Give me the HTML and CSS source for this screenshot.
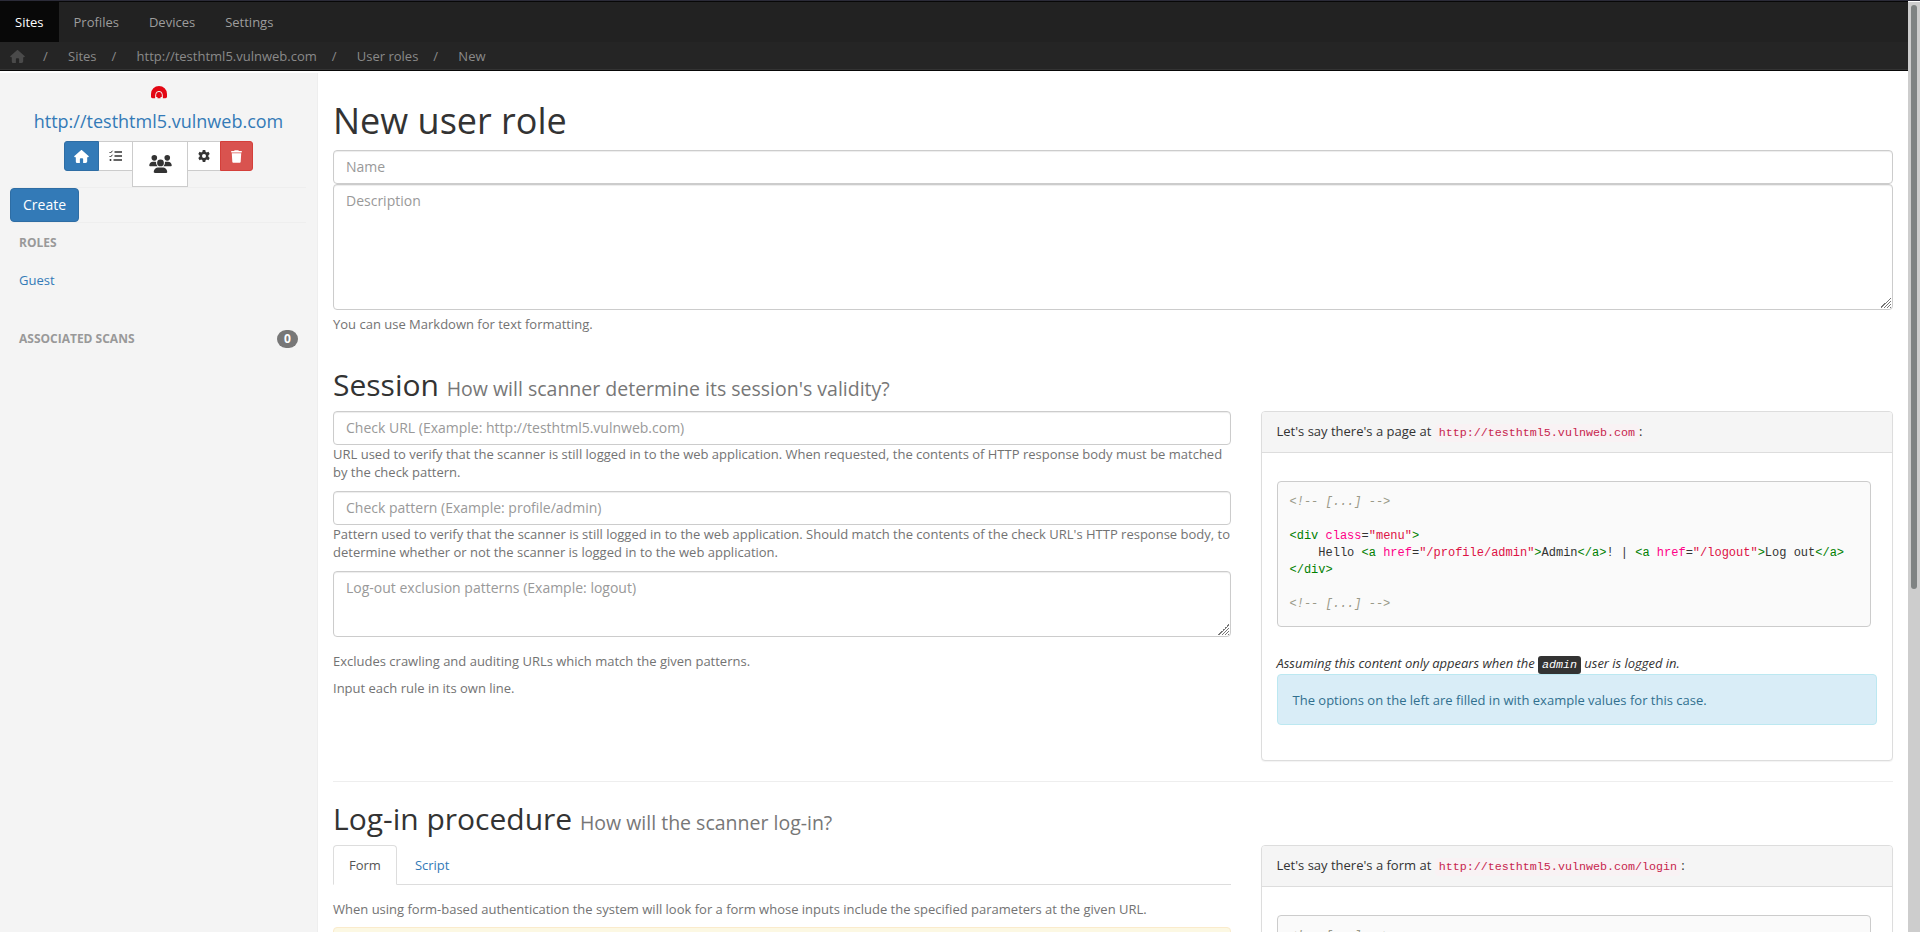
FILE: index.html
```html
<!DOCTYPE html>
<html lang="en">
<head>
<meta charset="utf-8">
<title>New user role</title>
<link rel="stylesheet" href="styles.css">
</head>
<body>
<div class="window">
<div class="page">
  <header>
    <nav class="navbar">
      <a class="nav-item active">Sites</a><a class="nav-item">Profiles</a><a class="nav-item">Devices</a><a class="nav-item">Settings</a>
    </nav>
    <ol class="breadcrumb">
      <li><svg class="crumb-home" viewBox="0 0 576 512"><path d="M575.8 255.5c0 18-15 32.1-32 32.1h-32l.7 160.2c.2 35.5-28.500 64.200-64 64.200H352V352c0-18-14-32-32-32h-64c-18 0-32 14-32 32v160H128c-35 0-64-28-64-64V287.600H32c-18 0-32-14-32-32 0-9 3-17 10-24L266.400 8c7-7 15-8 22-8s15 2 21 7l255 224.500c8 7 12 15 11.400 24z"/></svg></li>
      <li>Sites</li><li>http://testhtml5.vulnweb.com</li><li>User roles</li><li>New</li>
    </ol>
  </header>
  <div class="body">
    <aside class="sidebar">
      <svg class="logo" viewBox="0 0 16 13"><path d="M0 8a8 8 0 0 1 16 0v3a2 2 0 0 1-2 1.200H2A2 2 0 0 1 0 11z" fill="#e30613"/><path d="M4.700 11.500V8.700a3.300 3.300 0 0 1 6.600 0v2.800" fill="none" stroke="#f4f4f4" stroke-width="1"/><path d="M4.200 11h2.300v2H4.200zM9.500 11h2.300v2H9.500z" fill="#f4f4f4"/><circle cx="8" cy="9.600" r="2.100" fill="#e30613"/></svg>
      <a class="site-link">http://testhtml5.vulnweb.com</a>
      <div class="btn-group">
        <a class="btn primary"><svg width="15" height="13" viewBox="0 0 576 512"><path d="M575.8 255.5c0 18-15 32.1-32 32.1h-32l.7 160.2c.2 35.5-28.500 64.200-64 64.200H352V352c0-18-14-32-32-32h-64c-18 0-32 14-32 32v160H128c-35 0-64-28-64-64V287.600H32c-18 0-32-14-32-32 0-9 3-17 10-24L266.400 8c7-7 15-8 22-8s15 2 21 7l255 224.500c8 7 12 15 11.400 24z"/></svg></a>
        <a class="btn list"><svg width="13" height="12" viewBox="0 0 26 24"><path d="M11 2.500h15v3H11zM11 10.500h15v3H11zM9 18.500h17v3H9zM3 18a2 2 0 1 1 0 4 2 2 0 0 1 0-4z"/><path d="M1 4 3 6 7 1.500M1 12l2 2L7 9.500" fill="none" stroke="currentColor" stroke-width="2"/></svg></a>
        <a class="btn current"><svg width="23" height="18" viewBox="0 0 640 512"><circle cx="144" cy="80" r="80"/><circle cx="512" cy="80" r="80"/><circle cx="320" cy="224" r="96"/><path d="M0 298.700C0 239.800 47.800 192 106.700 192h42.600c16 0 31 3.500 44.700 9.700a129 129 0 0 0 41 118.300H21.300C9.600 320 0 310.400 0 298.700zM405.300 320h-.3a128 128 0 0 0 41-118.300c13.600-6.200 28.700-9.700 44.600-9.700h42.700C592.200 192 640 239.800 640 298.700c0 11.700-9.600 21.300-21.300 21.300zM128 485.300C128 411.700 187.700 352 261.300 352h117.400C452.300 352 512 411.700 512 485.300c0 14.700-11.900 26.700-26.700 26.700H154.700c-14.800 0-26.700-12-26.700-26.700z"/></svg></a>
        <a class="btn gear"><svg width="12" height="12" viewBox="0 0 24 24"><path fill-rule="evenodd" d="M9.500 0h5l.7 3.400 2.400 1.400 3.300-1.100 2.500 4.300-2.600 2.300v3.400l2.600 2.300-2.500 4.300-3.300-1.100-2.400 1.400-.7 3.400h-5l-.7-3.400-2.400-1.400-3.300 1.100L.6 16l2.600-2.300v-3.400L.6 8l2.500-4.300 3.300 1.100 2.400-1.400zM12 8a4 4 0 1 0 0 8 4 4 0 0 0 0-8z"/></svg></a>
        <a class="btn danger"><svg width="11" height="13" viewBox="0 0 448 512"><path d="M135 18c6-11 17-18 29-18h120c12 0 23 7 29 18l7 14h96c18 0 32 14 32 32s-14 32-32 32H32C14 96 0 82 0 64s14-32 32-32h96zM32 128h384l-21 339c-2 25-23 45-48 45H101c-25 0-46-20-48-45z"/></svg></a>
      </div>
      <div class="create-row"><a class="create">Create</a></div>
      <h5 class="side-title">ROLES</h5>
      <a class="role-link">Guest</a>
      <h5 class="side-title scans">ASSOCIATED SCANS <span class="badge">0</span></h5>
    </aside>
    <main class="main">
      <h1>New user role</h1>
      <input class="control" type="text" placeholder="Name">
      <textarea class="control description" placeholder="Description"></textarea>
      <p class="help markdown">You can use Markdown for text formatting.</p>

      <h2 class="session-title">Session <small>How will scanner determine its session's validity?</small></h2>
      <section class="row session">
        <div class="fields">
          <input class="control" type="text" placeholder="Check URL (Example: http://testhtml5.vulnweb.com)">
          <p class="help">URL used to verify that the scanner is still logged in to the web application. When requested, the contents of HTTP response body must be matched by the check pattern.</p>
          <input class="control" type="text" placeholder="Check pattern (Example: profile/admin)">
          <p class="help">Pattern used to verify that the scanner is still logged in to the web application. Should match the contents of the check URL's HTTP response body, to determine whether or not the scanner is logged in to the web application.</p>
          <textarea class="control exclusions" placeholder="Log-out exclusion patterns (Example: logout)"></textarea>
          <p class="help note">Excludes crawling and auditing URLs which match the given patterns.</p>
          <p class="help note">Input each rule in its own line.</p>
        </div>
        <div class="panel">
          <div class="panel-heading">Let's say there's a page at <code>http://testhtml5.vulnweb.com</code>:</div>
          <div class="panel-body">
<pre><i>&lt;!-- [...] --&gt;</i>

<b>&lt;div</b> <u>class</u>=<s>"menu"</s><b>&gt;</b>
    Hello <b>&lt;a</b> <u>href</u>=<s>"/profile/admin"</s><b>&gt;</b>Admin<b>&lt;/a&gt;</b>! | <b>&lt;a</b> <u>href</u>=<s>"/logout"</s><b>&gt;</b>Log out<b>&lt;/a&gt;</b>
<b>&lt;/div&gt;</b>

<i>&lt;!-- [...] --&gt;</i></pre>
            <p class="assumption">Assuming this content only appears when the <kbd>admin</kbd> user is logged in.</p>
            <div class="alert info">The options on the left are filled in with example values for this case.</div>
          </div>
        </div>
      </section>
      <hr>
      <h2 class="login-title">Log-in procedure <small>How will the scanner log-in?</small></h2>
      <section class="row">
        <div class="fields">
          <div class="tabs"><a class="tab selected">Form</a><a class="tab">Script</a></div>
          <p class="help form-help">When using form-based authentication the system will look for a form whose inputs include the specified parameters at the given URL.</p>
          <div class="alert warning"></div>
        </div>
        <div class="panel">
          <div class="panel-heading">Let's say there's a form at <code>http://testhtml5.vulnweb.com/login</code>:</div>
          <div class="panel-body">
<pre><i>&lt;!-- [...] --&gt;</i>
</pre>
          </div>
        </div>
      </section>
    </main>
  </div>
</div>
<div class="scrollbar"><div class="thumb"></div></div>
</div>
</body>
</html>
```
FILE: styles.css
```css
* { box-sizing: border-box; }
html, body { margin: 0; height: 100%; overflow: hidden; }
body {
  font: 13px/1.42857 "Open Sans", "Noto Sans", sans-serif;
  color: #333;
  background: #fff;
}
.window { display: flex; height: 932px; overflow: hidden; border-top: 1px solid #2b2b38; }
.page { width: 1908px; height: 931px; overflow: hidden; }
.scrollbar { width: 12px; height: 930px; margin-top: 1px; background: #cdcdcd; padding: 3px 3px 0; }
.thumb { width: 6px; height: 584px; border-radius: 3px; background: #7f8383; }

.navbar { display: flex; height: 41px; background: #222; border-top: 1px solid #080808; }
.nav-item { padding: 11px 15px 10px; color: #9d9d9d; }
.nav-item.active { color: #fff; background: #080808; }
.breadcrumb {
  display: flex; align-items: center; height: 29px; margin: 0; padding: 0 10px;
  list-style: none; background: #252525; color: #8a8a8a;
  border-bottom: 1px solid #080808; box-shadow: inset 0 -1px #333;
}
.breadcrumb li { display: flex; align-items: center; }
.breadcrumb li + li::before { content: "/"; width: 25px; margin-left: 15px; }
.crumb-home { width: 15px; height: 13px; margin-right: 3px; fill: #4a4a4a; }

.body { display: flex; align-items: flex-start; }
.sidebar {
  width: 318px; height: 860px; margin-top: 2px; padding: 13px 10px 0;
  background: #f4f4f4; border-right: 1px solid #eee;
  display: flex; flex-direction: column; align-items: stretch;
}
.logo { width: 16px; height: 13px; align-self: center; }
.site-link { font-size: 18px; line-height: 20px; margin-top: 12px; text-align: center; color: #337ab7; }
.btn-group { display: flex; justify-content: center; align-items: flex-start; height: 46px; margin-top: 10px; }
.btn {
  display: flex; align-items: center; justify-content: center; width: 33px; height: 30px;
  background: #fff; border: 1px solid #ccc; border-left: 0; color: #333;
}
.btn svg { fill: currentColor; }
.primary { width: 35px; background: #337ab7; border: 1px solid #2e6da4; color: #fff; border-radius: 3px 0 0 3px; }
.current { width: 56px; height: 46px; border-left: 1px solid #ccc; }
.list { border-right: 0; }
.gear { width: 32px; border-right: 0; }
.danger { background: #d9534f; border: 1px solid #d43f3a; color: #fff; border-radius: 0 3px 3px 0; }
.create-row { height: 36px; border-top: 1px solid #eee; border-bottom: 1px solid #eee; margin-right: 1px; }
.create {
  display: inline-block; height: 34px; padding: 6px 12px; font-size: 14px; line-height: 20px;
  color: #fff; background: #337ab7; border: 1px solid #2e6da4; border-radius: 4px;
}
.side-title { margin: 11px 9px 0; font-size: 12px; line-height: 18px; color: #999; font-weight: 700; }
.role-link { margin: 19px 9px 0; color: #337ab7; }
.scans { margin-top: 40px; display: flex; justify-content: space-between; }
.badge { width: 21px; height: 18px; border-radius: 9px; background: #777; color: #fff; text-align: center; }

.main { width: 1590px; padding: 0 15px; }
h1, h2 { font-weight: 400; line-height: 1.1; margin: 0; }
h1 { font-size: 36px; padding: 30px 0 9px; }
h2 { font-size: 30px; }
small { font-size: 19.5px; color: #777; }
.control {
  display: block; width: 100%; height: 34px; margin: 0; padding: 6px 12px;
  font: 14px/1.42857 "Open Sans", "Noto Sans", sans-serif;
  border: 1px solid #ccc; border-radius: 4px; background: #fff;
  box-shadow: inset 0 1px 1px rgba(0,0,0,.075);
}
.control::placeholder { color: #999; }
.control::-webkit-resizer {
  background: linear-gradient(135deg, transparent 50%, #777 50% 56%, transparent 56% 64%, #777 64% 70%, transparent 70% 78%, #777 78% 84%, transparent 84% 91%, #777 91%) no-repeat right 1px bottom 1px / 11px 11px;
}
.description { height: 126px; }
.exclusions { height: 66px; }
.help { margin: 0 0 9px; color: #737373; line-height: 18.57px; }
.markdown { margin-top: 5px; }
.session-title { padding: 25.4px 0 10px; }
.row { display: grid; grid-template-columns: 897.5px 632.5px; column-gap: 30px; align-items: start; }
.exclusions + .note { margin-top: 15px; }
.panel { border: 1px solid #ddd; border-radius: 4px; background: #fff; box-shadow: 0 1px 1px rgba(0,0,0,.05); }
.panel-heading { height: 41px; padding: 10px 15px; background: #f5f5f5; border-bottom: 1px solid #ddd; border-radius: 3px 3px 0 0; }
.panel-body { padding: 28px 15px 35px; }
code { padding: 2px 4px; font: 11.7px "Liberation Mono", monospace; color: #c7254e; background: #f9f2f4; border-radius: 4px; }
pre {
  width: 594px; height: 146px; margin: 0; padding: 12px 12px 0; overflow: hidden;
  font: 12px/17.14px "Liberation Mono", monospace; background: #fafafa; border: 1px solid #ccc; border-radius: 4px;
}
pre i { color: #998; }
pre b { color: #008000; font-weight: 400; }
pre u { color: #f08; text-decoration: none; }
pre s { color: #d14; text-decoration: none; }
.assumption { margin: 26px 0 0; height: 21px; line-height: 20px; font-style: italic; letter-spacing: -.02px; }
kbd { padding: 2px 4px; font: italic 11.7px "Liberation Mono", monospace; color: #fff; background: #333; border-radius: 3px; }
.alert { border: 1px solid; border-radius: 4px; padding: 16px 15px 14px; }
.info { height: 51px; color: #31708f; background: #d9edf7; border-color: #bce8f1; }
.warning { height: 60px; background: #fcf8e3; border-color: #faebcc; }
hr { height: 1px; margin: 20px 0 0; border: 0; background: #eee; }
.login-title { padding: 20px 0 10px; }
.tabs { display: flex; height: 40px; border-bottom: 1px solid #ddd; }
.tab { height: 40px; padding: 10px 15px; border: 1px solid transparent; color: #337ab7; margin-right: 2px; }
.tab.selected { color: #555; background: #fff; border-color: #ddd #ddd #fff; border-radius: 4px 4px 0 0; }
.form-help { margin: 15px 0 9px; }
```
